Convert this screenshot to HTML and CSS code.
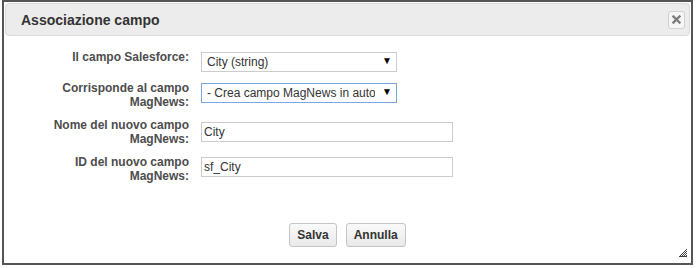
FILE: index.html
```
<!DOCTYPE html>
<html lang="it">
<head>
    <meta charset="UTF-8">
    <meta name="viewport" content="width=device-width, initial-scale=1.0">
    <title>Associazione campo</title>
    <link rel="stylesheet" href="styles.css">
</head>
<body>
    <div class="dialog">
        <div class="dialog-titlebar">
            <span class="dialog-title">Associazione campo</span>
            <button type="button" class="dialog-close" title="Chiudi">
                <svg width="9" height="9" viewBox="0 0 9 9">
                    <path d="M1.5 1.5 L7.5 7.5 M7.5 1.5 L1.5 7.5" stroke="#7c7c7c" stroke-width="2.4" stroke-linecap="square"/>
                </svg>
            </button>
        </div>

        <form class="dialog-content">
            <div class="form-row">
                <label for="sfField">Il campo Salesforce:</label>
                <div class="select-wrap">
                    <select id="sfField">
                        <option>City (string)</option>
                    </select>
                </div>
            </div>
            <div class="form-row">
                <label for="mnField">Corrisponde al campo MagNews:</label>
                <div class="select-wrap focused">
                    <select id="mnField">
                        <option>- Crea campo MagNews in automatico -</option>
                    </select>
                </div>
            </div>
            <div class="form-row">
                <label for="newName">Nome del nuovo campo MagNews:</label>
                <input type="text" id="newName" value="City">
            </div>
            <div class="form-row">
                <label for="newId">ID del nuovo campo MagNews:</label>
                <input type="text" id="newId" value="sf_City">
            </div>
        </form>

        <div class="dialog-buttons">
            <button type="button">Salva</button>
            <button type="button">Annulla</button>
        </div>

        <svg class="resize-handle" width="8" height="8" viewBox="0 0 8 8">
            <!-- dotted grip -->
            <rect x="7" y="0" width="1" height="1" fill="#444"/>
            <rect x="6" y="1" width="1" height="1" fill="#444"/>
            <rect x="5" y="2" width="1" height="1" fill="#444"/>
            <rect x="7" y="2" width="1" height="1" fill="#444"/>
            <rect x="4" y="3" width="1" height="1" fill="#444"/>
            <rect x="6" y="3" width="1" height="1" fill="#444"/>
            <rect x="3" y="4" width="1" height="1" fill="#444"/>
            <rect x="5" y="4" width="1" height="1" fill="#444"/>
            <rect x="7" y="4" width="1" height="1" fill="#444"/>
            <rect x="2" y="5" width="1" height="1" fill="#444"/>
            <rect x="4" y="5" width="1" height="1" fill="#444"/>
            <rect x="6" y="5" width="1" height="1" fill="#444"/>
            <rect x="1" y="6" width="1" height="1" fill="#444"/>
            <rect x="3" y="6" width="1" height="1" fill="#444"/>
            <rect x="5" y="6" width="1" height="1" fill="#444"/>
            <rect x="7" y="6" width="1" height="1" fill="#444"/>
            <rect x="0" y="7" width="8" height="1" fill="#444"/>
        </svg>
    </div>
</body>
</html>
```

FILE: styles.css
```
body {
    margin: 0;
    background-color: #fff;
    font-family: "Liberation Sans", Arial, sans-serif;
}

.dialog {
    position: relative;
    box-sizing: border-box;
    width: 691px;
    height: 265px;
    margin-left: 2px;
    border: 2px solid #555;
    background-color: #fff;
    padding: 1px 1px 0 1px;
}

.dialog-titlebar {
    display: flex;
    align-items: center;
    justify-content: space-between;
    height: 31px;
    padding: 0 4px 0 15px;
    background-color: #ececec;
    border: 1px solid #dadada;
    border-radius: 4px;
}

.dialog-title {
    font-size: 14px;
    font-weight: bold;
    color: #333;
}

.dialog-close {
    display: flex;
    align-items: center;
    justify-content: center;
    width: 17px;
    height: 18px;
    padding: 0;
    background-color: #f6f6f6;
    border: 1px solid #d0d0d0;
    border-radius: 3px;
}

.dialog-content {
    display: flex;
    flex-direction: column;
    gap: 9px;
    padding-top: 14px;
}

.form-row {
    display: grid;
    grid-template-columns: 184px 252px;
    column-gap: 12px;
    align-items: start;
}

.form-row label {
    font-size: 12px;
    font-weight: bold;
    line-height: 14px;
    color: #4d4d4d;
    text-align: right;
    padding-left: 40px;
}

.select-wrap {
    position: relative;
    width: 196px;
    margin-top: 2px;
}

.select-wrap select {
    appearance: none;
    box-sizing: border-box;
    width: 100%;
    height: 20px;
    padding: 0 21px 0 5px;
    font-family: "Liberation Sans", Arial, sans-serif;
    font-size: 12px;
    color: #333;
    background-color: #fff;
    border: 1px solid #ccc;
    border-radius: 0;
}

.select-wrap.focused select {
    border-color: #7ba7e0;
}

.select-wrap::after {
    content: "\25BC";
    position: absolute;
    right: 5px;
    top: 3px;
    font-size: 10px;
    color: #000;
    pointer-events: none;
}

.form-row input {
    box-sizing: border-box;
    width: 252px;
    height: 20px;
    margin-top: 4px;
    padding: 0 2px;
    font-family: "Liberation Sans", Arial, sans-serif;
    font-size: 12px;
    color: #333;
    border: 1px solid #ccc;
}

.form-row:last-child input {
    margin-top: 2px;
}

.dialog-buttons {
    display: flex;
    justify-content: center;
    gap: 9px;
    margin-top: 40px;
}

.dialog-buttons button {
    height: 24px;
    padding: 0 7px;
    font-family: "Liberation Sans", Arial, sans-serif;
    font-size: 12px;
    font-weight: bold;
    color: #333;
    background: linear-gradient(#fafafa, #e9e9e9);
    border: 1px solid #c5c5c5;
    border-radius: 3px;
}

.resize-handle {
    position: absolute;
    right: 4px;
    bottom: 6px;
}
```
